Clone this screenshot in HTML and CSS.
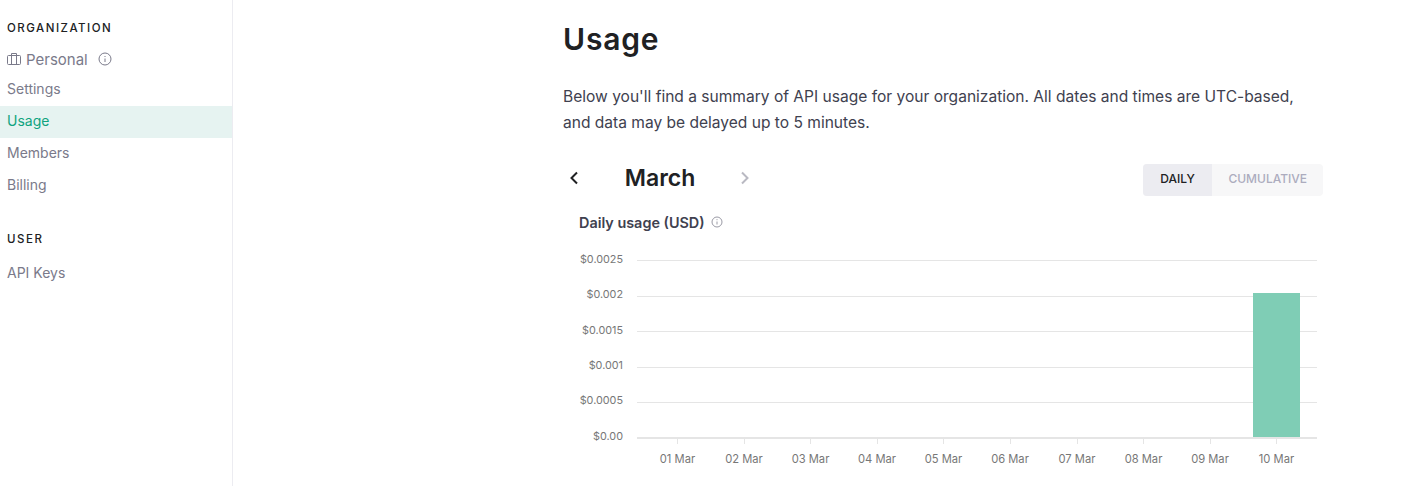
FILE: index.html
```html
<!DOCTYPE html>
<html lang="en">
  <head>
    <meta charset="UTF-8" />
    <title>Usage</title>
    <link rel="stylesheet" href="styles.css">
  </head>
  <body>
    <div class="layout">
      <nav class="sidebar">
        <div class="nav-heading org-heading">ORGANIZATION</div>
        <div class="org-name">
          <svg class="icon-case" viewBox="0 0 14 14" width="14" height="14" fill="none" stroke="currentColor" stroke-width="1">
            <rect x="0.5" y="3.5" width="13" height="9" rx="1" />
            <path d="M4.5 3.5V12.5M9.5 3.5V12.5M4.5 3.5V1.500H9.5V3.5" />
          </svg>
          <span>Personal</span>
          <svg class="icon-info" viewBox="0 0 14 14" width="14" height="14" fill="none" stroke="currentColor" stroke-width="1">
            <circle cx="7" cy="7" r="6" />
            <path d="M7 6.5V10M7 4V5" />
          </svg>
        </div>
        <a class="nav-item first-item">Settings</a>
        <a class="nav-item active">Usage</a>
        <a class="nav-item">Members</a>
        <a class="nav-item">Billing</a>
        <div class="nav-heading user-heading">USER</div>
        <a class="nav-item">API Keys</a>
      </nav>

      <main class="content">
        <h1>Usage</h1>
        <p class="intro">
          Below you'll find a summary of API usage for your organization. All dates and times are UTC-based,
          and data may be delayed up to 5 minutes.
        </p>

        <div class="toolbar">
          <div class="month-nav">
            <svg class="chevron" viewBox="0 0 12 16" width="12" height="16" fill="none" stroke="#202123" stroke-width="2">
              <path d="M9 2.5L3.5 8L9 13.5" />
            </svg>
            <span class="month">March</span>
            <svg class="chevron" viewBox="0 0 12 16" width="12" height="16" fill="none" stroke="#b9b9c2" stroke-width="2">
              <path d="M3 2.5L8.5 8L3 13.5" />
            </svg>
          </div>
          <div class="toggle">
            <span class="toggle-item selected">DAILY</span>
            <span class="toggle-item">CUMULATIVE</span>
          </div>
        </div>

        <div class="chart-title">
          <span>Daily usage (USD)</span>
          <svg viewBox="0 0 12 12" width="12" height="12" fill="none" stroke="#9a9aa5" stroke-width="1">
            <circle cx="6" cy="6" r="5" />
            <path d="M6 5.5V8.5M6 3.2V4.2" />
          </svg>
        </div>

        <svg class="chart" width="760" height="232" viewBox="0 0 760 232">
          <g class="grid">
            <path d="M74 13.5H754M74 49.5H754M74 84.5H754M74 120.5H754M74 155.5H754" />
          </g>
          <g class="y-labels">
            <text x="60" y="16">$0.0025</text>
            <text x="60" y="51">$0.002</text>
            <text x="60" y="87">$0.0015</text>
            <text x="60" y="122">$0.001</text>
            <text x="60" y="157">$0.0005</text>
            <text x="60" y="193">$0.00</text>
          </g>
          <rect class="bar" x="690" y="46" width="47" height="144" />
          <path class="axis" d="M74 191H754" />
          <path class="ticks" d="M114.5 192V197M181.5 192V197M247.5 192V197M314.5 192V197M380.5 192V197M447.5 192V197M514.5 192V197M580.5 192V197M647.5 192V197M713.5 192V197" />
          <g class="x-labels">
            <text x="114.500" y="216">01 Mar</text>
            <text x="181" y="216">02 Mar</text>
            <text x="247.500" y="216">03 Mar</text>
            <text x="314" y="216">04 Mar</text>
            <text x="380.500" y="216">05 Mar</text>
            <text x="447" y="216">06 Mar</text>
            <text x="514" y="216">07 Mar</text>
            <text x="580.500" y="216">08 Mar</text>
            <text x="647" y="216">09 Mar</text>
            <text x="713.500" y="216">10 Mar</text>
          </g>
        </svg>
      </main>
    </div>
  </body>
</html>
```

FILE: styles.css
```css
html,
body {
  height: 100%;
  margin: 0;
  overflow: hidden;
}
body {
  font-family: "Inter", "Liberation Sans", sans-serif;
  color: #353740;
  background-color: #fff;
}
.layout {
  display: flex;
  height: 100%;
}
.sidebar {
  width: 232px;
  flex-shrink: 0;
  border-right: 1px solid #ececf1;
  padding-top: 21px;
  box-sizing: content-box;
}
.nav-heading {
  padding-left: 7px;
  font-size: 11.5px;
  line-height: 14px;
  font-weight: 500;
  letter-spacing: 1.5px;
  color: #202123;
}
.user-heading {
  margin-top: 30px;
  margin-bottom: 12px;
}
.org-name {
  display: flex;
  align-items: center;
  padding-left: 7px;
  margin-top: 13px;
  height: 22px;
  font-size: 15px;
  color: #7a7a8a;
}
.icon-case {
  margin-right: 5px;
}
.icon-info {
  margin-left: 10px;
}
.nav-item {
  display: block;
  height: 32px;
  line-height: 30px;
  padding-left: 7px;
  font-size: 14px;
  color: #7a7a8a;
}
.first-item {
  height: 24px;
  line-height: 24px;
  margin-top: 7px;
  margin-bottom: 5px;
}
.nav-item.active {
  background-color: #e6f3f1;
  color: #10a37f;
}
.content {
  width: 760px;
  margin-left: 330px;
}
h1 {
  margin: 18px 0 0;
  font-size: 30px;
  line-height: 42px;
  font-weight: 600;
  letter-spacing: 0.8px;
  color: #202123;
}
.intro {
  margin: 24px 0 0;
  font-size: 15.55px;
  line-height: 26px;
  color: #40414f;
}
.toolbar {
  display: flex;
  justify-content: space-between;
  align-items: center;
  margin-top: 28px;
}
.month-nav {
  display: flex;
  align-items: center;
  margin-bottom: 4px;
}
.chevron {
  margin-left: 5px;
}
.month {
  width: 110px;
  margin: 0 19px 0 25px;
  text-align: center;
  font-size: 23px;
  font-weight: 600;
  color: #202123;
}
.toggle {
  display: flex;
  height: 32px;
  border-radius: 4px;
  overflow: hidden;
  background-color: #f7f7f8;
}
.toggle-item {
  padding: 0 16px;
  font-size: 12px;
  line-height: 30px;
  font-weight: 500;
  color: #acacbe;
}
.toggle-item.selected {
  padding: 0 17.5px;
  background-color: #ececf1;
  color: #202123;
}
.chart-title {
  display: flex;
  align-items: center;
  gap: 6px;
  margin-top: 15px;
  padding-left: 16px;
  height: 22px;
  font-size: 14.4px;
  font-weight: 600;
  color: #40414f;
}
.chart {
  display: block;
  margin-top: 14px;
}
.grid path {
  stroke: #e5e5e5;
  stroke-width: 1;
}
.axis {
  stroke: #e5e5e5;
  stroke-width: 2;
}
.ticks {
  stroke: #e5e5e5;
  stroke-width: 1;
}
.bar {
  fill: #7fcdb5;
}
.y-labels text {
  font-size: 10.8px;
  fill: #777;
  text-anchor: end;
}
.x-labels text {
  font-size: 11.2px;
  fill: #777;
  text-anchor: middle;
}
```
